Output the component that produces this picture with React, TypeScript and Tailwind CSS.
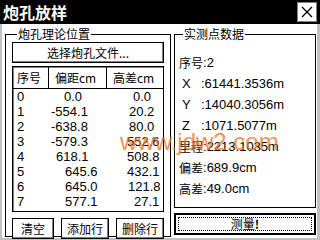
import React from "react"

const rows = [
  { n: "0", a: "0.0", b: "0.0", ax: 63, bx: 26 },
  { n: "1", a: "-554.1", b: "20.2", ax: 50, bx: 22 },
  { n: "2", a: "-638.8", b: "80.0", ax: 50, bx: 22 },
  { n: "3", a: "-579.3", b: "552.6", ax: 50, bx: 20 },
  { n: "4", a: "618.1", b: "508.8", ax: 55, bx: 20 },
  { n: "5", a: "645.6", b: "432.1", ax: 64, bx: 20 },
  { n: "6", a: "645.0", b: "121.8", ax: 64, bx: 21 },
  { n: "7", a: "577.1", b: "27.1", ax: 64, bx: 27 },
]

const info = [
  ["序号", ":2", true],
  ["X", ":61441.3536m", false],
  ["Y", ":14040.3056m", false],
  ["Z", ":1071.5077m", false],
  ["里程", ":2213.1035m", true],
  ["偏差", ":689.9cm", true],
  ["高差", ":49.0cm", true],
] as const

function Btn({ children, className = "" }: { children: React.ReactNode; className?: string }) {
  return (
    <div className={"border border-black bg-white flex items-center justify-center shadow-[inset_-1px_-1px_0_#808080] " + className}>
      {children}
    </div>
  )
}

export default function App() {
  return (
    <div className="w-[320px] h-[240px] bg-white relative overflow-hidden text-black text-[12px] leading-none font-['Liberation_Sans','Noto_Sans_CJK_SC',sans-serif]">
      <div className="h-[24px] bg-black flex items-center justify-between pl-[3px] pr-[3px]">
        <span className="text-white font-bold text-[16px] font-['Noto_Sans_CJK_SC',sans-serif]">炮孔放样</span>
        <div className="w-[20px] h-[20px] bg-white border border-[#808080] flex items-center justify-center">
          <svg width="12" height="12" viewBox="0 0 12 12"><path d="M1 1L11 11M11 1L1 11" stroke="#000" strokeWidth="1.3" /></svg>
        </div>
      </div>
      <div className="h-[216px] border-l-2 border-r-[3px] border-b-2 border-[#c0c0c0] flex gap-[3px] pl-[3px] pt-[3px]">
        <fieldset className="w-[166px] h-[210px] border border-black px-[6px] pb-[3px]">
          <legend className="ml-[5px] px-[1px] text-[12px] leading-[14px] font-['Noto_Sans_CJK_SC',sans-serif]">炮孔理论位置</legend>
          <Btn className="h-[21px] mt-[1px] font-['Noto_Sans_CJK_SC',sans-serif]">选择炮孔文件...</Btn>
          <div className="mt-[3px] h-[146px] border border-black shadow-[inset_1px_1px_0_#808080]">
            <div className="flex h-[22px] border-b border-black font-['Noto_Sans_CJK_SC',sans-serif]">
              <div className="w-[36px] border-r border-black flex items-center pl-[4px]">序号</div>
              <div className="w-[58px] border-r border-black flex items-center pl-[6px]">偏距cm</div>
              <div className="flex-1 flex items-center pl-[6px]">高差cm</div>
            </div>
            {rows.map(r => (
              <div key={r.n} className="flex h-[15px] items-center text-[13px]">
                <div className="w-[36px] pl-[4px]">{r.n}</div>
                <div className="w-[58px]"><span style={{ paddingLeft: r.ax - 48 }}>{r.a}</span></div>
                <div className="flex-1"><span style={{ paddingLeft: r.bx }}>{r.b}</span></div>
              </div>
            ))}
          </div>
          <div className="flex gap-[7px] mt-[6px] font-['Noto_Sans_CJK_SC',sans-serif]">
            <Btn className="w-[42px] h-[21px]">清空</Btn>
            <Btn className="w-[48px] h-[21px]">添加行</Btn>
            <Btn className="w-[48px] h-[21px]">删除行</Btn>
          </div>
        </fieldset>
        <div className="w-[142px] flex flex-col">
          <fieldset className="h-[181px] border border-black pl-[4px]">
            <legend className="ml-[4px] px-[1px] text-[12px] leading-[14px] font-['Noto_Sans_CJK_SC',sans-serif]">实测点数据</legend>
            <div className="flex flex-col gap-[8px] pt-[15px]">
              {info.map(([k, v, cjk]) => (
                <div key={k} className="flex h-[13px] items-center text-[13px]">
                  <span className={cjk ? "text-[12px] font-['Noto_Sans_CJK_SC',sans-serif]" : "w-[22px] pl-[3px]"}>{k}</span>
                  <span>{v}</span>
                </div>
              ))}
            </div>
          </fieldset>
          <div className="mt-[5px] h-[22px] border-2 border-black bg-white p-[2px]">
            <div className="h-full border border-dotted border-black flex items-center justify-center font-['Noto_Sans_CJK_SC',sans-serif]">
              测量<span className="font-bold">!</span>
            </div>
          </div>
        </div>
      </div>
      <div className="absolute left-[120px] top-[130px] pointer-events-none text-[#e8731e] opacity-75 text-[24px] font-['Liberation_Sans',sans-serif]">www.jdw2.com</div>
    </div>
  )
}
